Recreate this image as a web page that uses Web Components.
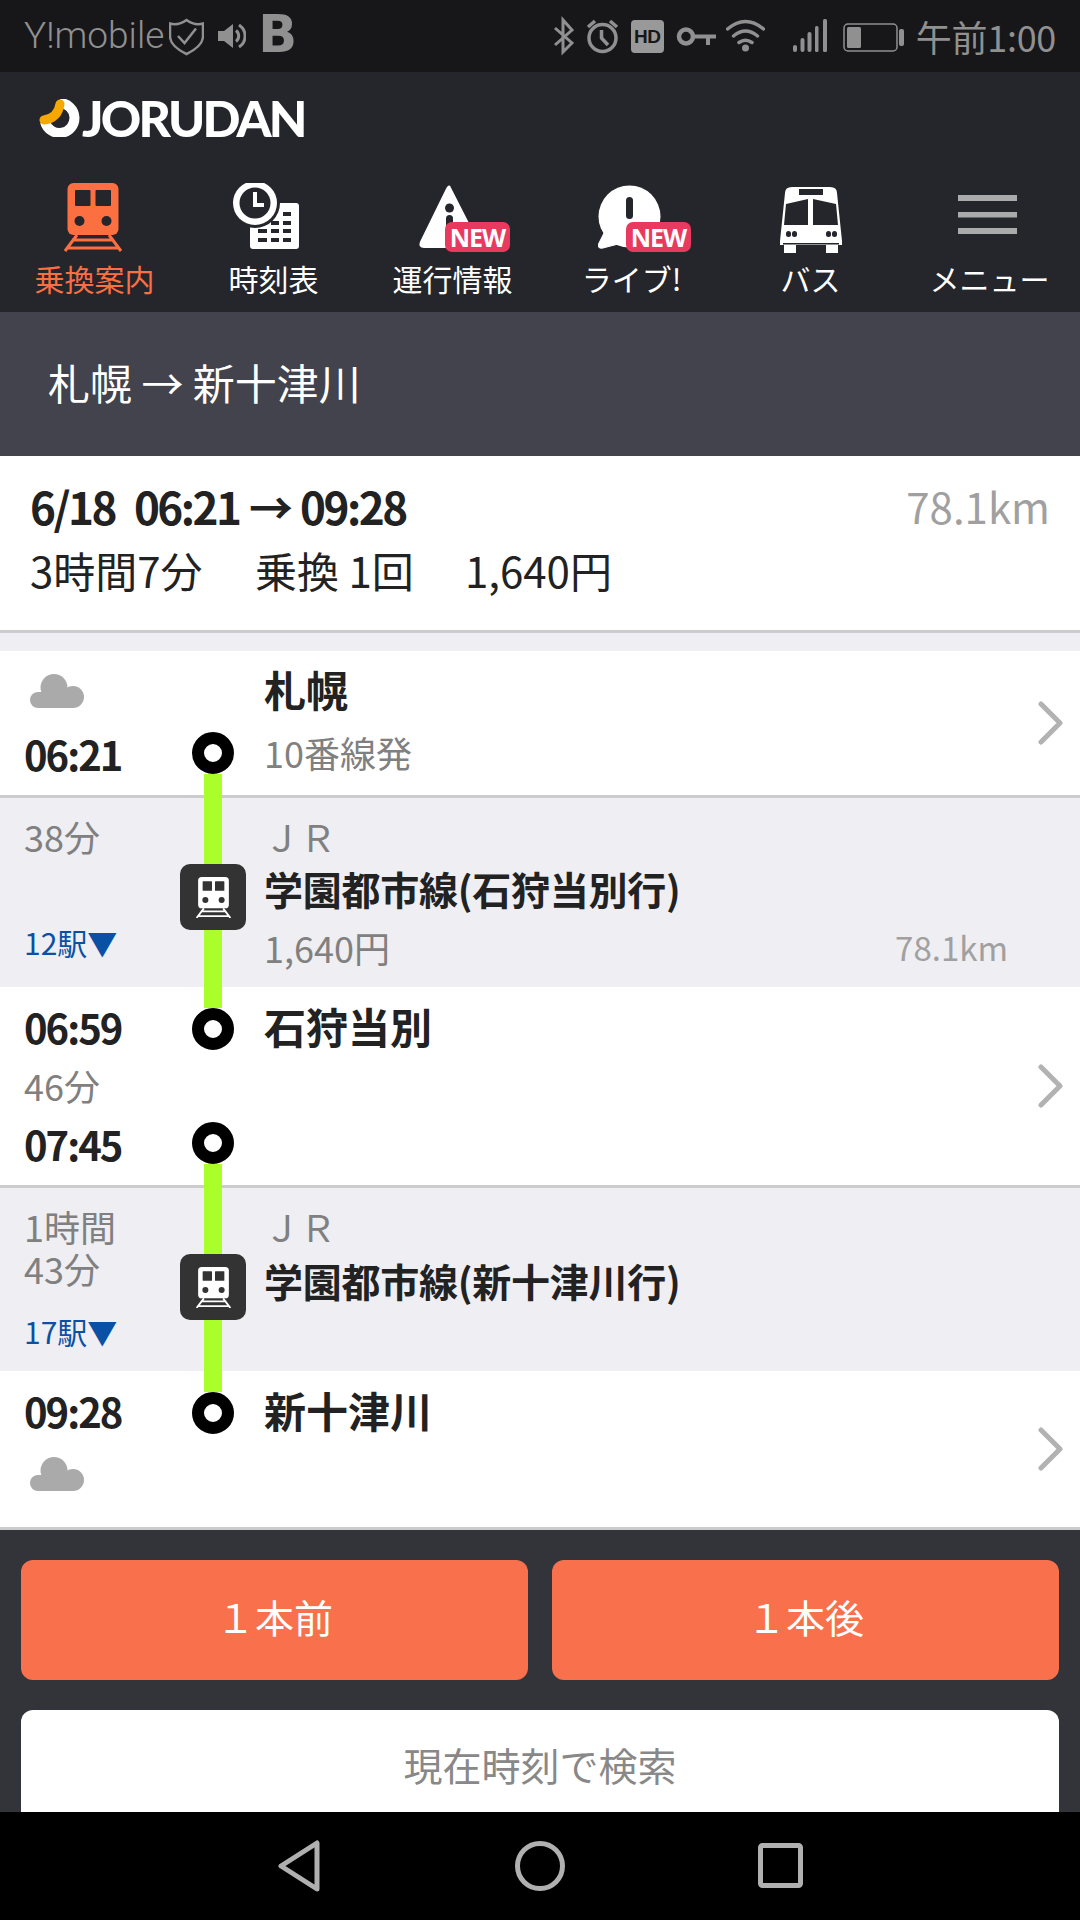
<!DOCTYPE html>
<html lang="ja"><head><meta charset="utf-8"><title>JORUDAN</title>
<style>
html,body{margin:0;padding:0;background:#eeeef3}
body{width:1080px;height:1920px;overflow:hidden;display:flex;flex-direction:column;font-family:"Noto Sans CJK JP","Noto Sans",sans-serif;color:#222}
</style></head><body>
<jr-status></jr-status>
<jr-header></jr-header>
<jr-title>札幌 → 新十津川</jr-title>
<jr-summary></jr-summary>
<jr-gap></jr-gap>

<jr-row h="147" border>
  <jr-icon slot="left" name="cloud" style="margin:23px 0 0 6px"></jr-icon>
  <jr-text slot="left" kind="time" style="margin-top:21px">06:21</jr-text>
  <jr-rail slot="track" space="81"></jr-rail><jr-dot slot="track"></jr-dot><jr-rail slot="track" h="24"></jr-rail>
  <jr-text slot="main" kind="name" style="margin-top:13px">札幌</jr-text>
  <jr-text slot="main" kind="sub" style="margin-top:16px">10番線発</jr-text>
  <jr-icon slot="aside" name="chevron"></jr-icon>
</jr-row>

<jr-row h="189" tone="seg">
  <jr-text slot="left" kind="sub" style="margin-top:16px">38分</jr-text>
  <jr-text slot="left" kind="stops" style="margin-top:64px">12駅▼</jr-text>
  <jr-rail slot="track" h="66"></jr-rail><jr-trainbox slot="track"></jr-trainbox><jr-rail slot="track" h="57"></jr-rail>
  <jr-text slot="main" kind="sub" style="margin-top:16px">ＪＲ</jr-text>
  <jr-text slot="main" kind="line" style="margin-top:5px">学園都市線(石狩当別行)</jr-text>
  <jr-split slot="main" style="margin-top:12px"><jr-text kind="sub">1,640円</jr-text><jr-text kind="dist">78.1km</jr-text></jr-split>
</jr-row>

<jr-row h="201" border>
  <jr-text slot="left" kind="time" style="margin-top:15px">06:59</jr-text>
  <jr-text slot="left" kind="sub" style="margin-top:11px">46分</jr-text>
  <jr-text slot="left" kind="time" style="margin-top:12px">07:45</jr-text>
  <jr-rail slot="track" h="21"></jr-rail><jr-dot slot="track"></jr-dot><jr-rail slot="track" space="72"></jr-rail><jr-dot slot="track"></jr-dot><jr-rail slot="track" h="24"></jr-rail>
  <jr-text slot="main" kind="name" style="margin-top:14px">石狩当別</jr-text>
  <jr-icon slot="aside" name="chevron"></jr-icon>
</jr-row>

<jr-row h="183" tone="seg">
  <jr-text slot="left" kind="sub" style="margin-top:17px;line-height:42px">1時間</jr-text>
  <jr-text slot="left" kind="sub" style="line-height:42px">43分</jr-text>
  <jr-text slot="left" kind="stops" style="margin-top:22px">17駅▼</jr-text>
  <jr-rail slot="track" h="66"></jr-rail><jr-trainbox slot="track"></jr-trainbox><jr-rail slot="track" h="51"></jr-rail>
  <jr-text slot="main" kind="sub" style="margin-top:16px">ＪＲ</jr-text>
  <jr-text slot="main" kind="line" style="margin-top:7px">学園都市線(新十津川行)</jr-text>
</jr-row>

<jr-row h="159" border>
  <jr-text slot="left" kind="time" style="margin-top:15px">09:28</jr-text>
  <jr-icon slot="left" name="cloud" style="margin:21px 0 0 6px"></jr-icon>
  <jr-rail slot="track" h="21"></jr-rail><jr-dot slot="track"></jr-dot>
  <jr-text slot="main" kind="name" style="margin-top:14px">新十津川</jr-text>
  <jr-icon slot="aside" name="chevron"></jr-icon>
</jr-row>

<jr-footer>
  <jr-button tone="orange">１本前</jr-button>
  <jr-button tone="orange">１本後</jr-button>
  <jr-button tone="white" wide>現在時刻で検索</jr-button>
</jr-footer>
<jr-nav></jr-nav>

<script>
const G='#909090', D='#25252c';
const ICONS={
 shield:[35,`<path d="M17.5 20C23 24 29 25 34 23.5V36C34 45 26 50 17.5 54C9 50 1 45 1 36V23.5C6 25 12 24 17.5 20Z" fill="none" stroke="${G}" stroke-width="2.5"/><path d="M9 36L15.5 43L27 28.5" fill="none" stroke="${G}" stroke-width="2.5"/>`,72],
 speaker:[28,`<path d="M0 31H6L15 24V48L6 41H0Z" fill="${G}"/><path d="M18 30.5a7 7 0 0 1 0 11M21 25a13 13 0 0 1 0 22" fill="none" stroke="${G}" stroke-width="3"/>`,72],
 bt:[21,`<path d="M2 28L19 43L10 52V20L19 30L2 45" fill="none" stroke="${G}" stroke-width="3"/>`,72],
 alarm:[33,`<circle cx="16.5" cy="38" r="13.5" fill="none" stroke="${G}" stroke-width="3.500"/><path d="M15.500 30V38L22 45M2 27L9 21M31 27L24 21" fill="none" stroke="${G}" stroke-width="3.500"/>`,72],
 key:[40,`<circle cx="10" cy="36.500" r="7" fill="none" stroke="${G}" stroke-width="4.500"/><path d="M17 36.500H40M32 36.500V45" fill="none" stroke="${G}" stroke-width="4"/>`,72],
 wifi:[39,`<path d="M1.500 29Q19.500 14 37.500 29M7.500 36Q19.500 26 31.500 36M13 42.500Q19.500 38 26 42.500" fill="none" stroke="${G}" stroke-width="3.500" stroke-linecap="round"/><circle cx="19.500" cy="48" r="3.500" fill="${G}"/>`,72],
 signal:[34,`<g fill="${G}"><rect x="0" y="45" width="4" height="7" rx="2"/><rect x="7.500" y="38" width="4" height="14" rx="2"/><rect x="14.500" y="32" width="4" height="20" rx="2"/><rect x="22" y="26" width="3.500" height="26" rx="1.500"/><rect x="30" y="19" width="4" height="33" rx="1.500"/></g>`,72],
 battery:[61,`<rect x="1" y="24" width="53" height="27" rx="4" fill="none" stroke="${G}" stroke-width="1.500"/><rect x="4" y="27" width="14" height="21" rx="1.500" fill="${G}"/><rect x="56" y="29" width="5" height="17" rx="2" fill="${G}"/>`,72],
 train:[58,`<rect x="3.500" y="0" width="51" height="52" rx="6" fill="currentColor"/><g fill="var(--hole,${D})"><rect x="11" y="7" width="15.500" height="16" rx="1"/><rect x="31.500" y="7" width="15.500" height="16" rx="1"/><circle cx="15.500" cy="38" r="5"/><circle cx="42.500" cy="38" r="5"/></g><path d="M13 52L1 68M45 52L57 68M8 57H50M3 65H55" stroke="currentColor" stroke-width="3" fill="none"/>`,68],
 tab_train:[58,`<rect x="3.500" y="0" width="51" height="52" rx="6" fill="currentColor"/><g fill="${D}"><rect x="11" y="7" width="15.500" height="16" rx="1"/><rect x="31.500" y="7" width="15.500" height="16" rx="1"/><circle cx="15.500" cy="38" r="5"/><circle cx="42.500" cy="38" r="5"/></g><path d="M13 52L1 68M45 52L57 68M8 57H50M3 65H55" stroke="currentColor" stroke-width="3" fill="none"/>`,70],
 timetable:[66,`<rect x="17" y="20" width="49" height="46" rx="3" fill="#fff"/><g fill="${D}"><rect x="50" y="29" width="8" height="4"/><rect x="25" y="38" width="9" height="4"/><rect x="38" y="38" width="8" height="4"/><rect x="50" y="38" width="8" height="4"/><rect x="25" y="46" width="9" height="4"/><rect x="38" y="46" width="8" height="4"/><rect x="50" y="46" width="8" height="4"/><rect x="25" y="55" width="9" height="4"/><rect x="38" y="55" width="8" height="4"/><rect x="50" y="55" width="8" height="4"/></g><circle cx="22" cy="20" r="25" fill="${D}"/><circle cx="22" cy="20" r="22" fill="#fff"/><circle cx="22" cy="20" r="15.500" fill="${D}"/><path d="M22 9V22H31" fill="none" stroke="#fff" stroke-width="4"/>`,70],
 warning:[66,`<path d="M30.500 4L58 58Q60 64 56 64H5Q0 64 2 59L27 8Q30 2 30.500 4Z" fill="#fff" stroke="#fff" stroke-width="2" stroke-linejoin="round"/><circle cx="30.500" cy="25" r="4.500" fill="${D}"/><rect x="27" y="32" width="7" height="30" rx="3.500" fill="${D}"/>`,70],
 bubble:[63,`<circle cx="31.500" cy="33.500" r="31" fill="#fff"/><path d="M6 50L0 62Q0 66 5 65L24 60Z" fill="#fff" stroke="#fff" stroke-linejoin="round"/><rect x="28" y="14" width="7" height="22" rx="3.500" fill="${D}"/>`,70],
 bus:[62,`<path d="M5 10Q5 4 12 4H50Q57 4 57 10L62 58V62H58V70H46V62H16V70H4V62H0V58Z" fill="#fff"/><g fill="${D}"><rect x="19" y="6" width="24" height="6"/><path d="M6 21L28 16V42H4Z"/><path d="M33 16L56 21L58 42H33Z"/><rect x="6" y="48" width="5" height="6" rx="2.500"/><rect x="12" y="48" width="5" height="6" rx="2.500"/><rect x="46" y="48" width="5" height="6" rx="2.500"/><rect x="52" y="48" width="5" height="6" rx="2.500"/><rect x="3" y="60" width="56" height="1.500"/></g>`,70],
 menu:[59,`<g fill="#aaa"><rect y="12" width="59" height="6"/><rect y="29" width="59" height="5.500"/><rect y="45" width="59" height="6"/></g>`,70],
 cloud:[54,`<g fill="#aaa"><circle cx="24" cy="13.500" r="13.500"/><circle cx="43" cy="23" r="11"/><circle cx="8" cy="26" r="8"/><rect x="8" y="18" width="35" height="16"/></g>`,34],
 chevron:[25,`<path d="M3 3L22 22L3 41" fill="none" stroke="#b2b2b2" stroke-width="5" stroke-linecap="round" stroke-linejoin="round"/>`,44],
 ring:[42,`<path d="M21 4A15 15 0 1 1 6 23" fill="none" stroke="#fff" stroke-width="10"/><path d="M5 21Q19 19 21 5" fill="none" stroke="#f7a800" stroke-width="9" stroke-linecap="round"/>`,38]
};
function svg(name){const [w,b,h]=ICONS[name];return `<svg xmlns="http://www.w3.org/2000/svg" width="${w}" height="${h}" viewBox="0 0 ${w} ${h}" style="display:block">${b}</svg>`;}
function def(tag,fn){customElements.define(tag,class extends HTMLElement{connectedCallback(){if(this.shadowRoot)return;const r=this.attachShadow({mode:'open'});r.innerHTML=fn(this);}});}

def('jr-icon',e=>`<style>:host{display:block;color:inherit}</style>${svg(e.getAttribute('name'))}`);

def('jr-status',()=>`<style>
:host{display:flex;align-items:center;height:72px;flex:none;background:#17171a;padding:0 24px 0 24px;box-sizing:border-box;color:${G};font-family:Roboto,"Noto Sans CJK JP",sans-serif;overflow:hidden}
.c{font-size:37px;font-weight:300;line-height:72px;white-space:nowrap}
.t{font-size:36px;font-family:"Noto Sans CJK JP",sans-serif;font-weight:400;margin-left:12px;line-height:68px;white-space:nowrap;letter-spacing:-.3px}
.b{font:bold 51px "DejaVu Sans",sans-serif;line-height:72px;margin-left:12px;position:relative;top:-1px}
.hd{width:33px;height:33px;border-radius:4px;background:#999;color:#17171a;font:bold 19px "Liberation Sans",sans-serif;display:flex;align-items:center;justify-content:center;margin:1px 0 0 12px;letter-spacing:-.5px}
.s{display:flex;align-items:center}.r{margin-left:auto}
svg{flex:none}
.g12{margin-left:12px}.g14{margin-left:14px}.g5{margin-left:5px}.g10{margin-left:10px}.g28{margin-left:28px}.g16{margin-left:16px}
</style><div class="s"><span class="c">Y!mobile</span><span class="g5" style="display:flex">${svg('shield')}</span><span class="g14" style="display:flex">${svg('speaker')}</span><span class="b">B</span></div>
<div class="s r">${svg('bt')}<span class="g12" style="display:flex">${svg('alarm')}</span><span class="hd">HD</span><span class="g12" style="display:flex">${svg('key')}</span><span class="g10" style="display:flex">${svg('wifi')}</span><span class="g28" style="display:flex">${svg('signal')}</span><span class="g16" style="display:flex">${svg('battery')}</span><span class="t">午前1:00</span></div>`);

def('jr-tab',e=>`<style>
:host{display:flex;flex-direction:column;align-items:center;color:#fff}
:host([active]){color:#fb6f41}
.i{height:70px;position:relative;display:block}
.n{position:absolute;top:39px;height:30px;width:65px;border-radius:7px;background:#e8395f;color:#fff;font:bold 25px/30px "Noto Sans",sans-serif;text-align:center;letter-spacing:-1px}
.l{margin-top:5px;font-size:30px;line-height:40px;white-space:nowrap}
</style><div class="i" style="margin-right:${e.getAttribute('shift')||0}px">${svg(e.getAttribute('icon'))}${e.hasAttribute('badge')?`<span class="n" style="left:${e.getAttribute('badge')}px">NEW</span>`:''}</div><div class="l"><slot></slot></div>`);

def('jr-header',()=>`<style>
:host{display:block;height:240px;flex:none;background:${D};box-sizing:border-box;overflow:hidden}
.logo{height:92px;display:flex;align-items:center;padding-left:39px;box-sizing:border-box}
.w{font:900 50px/1 Lato,"Noto Sans",sans-serif;color:#fff;letter-spacing:-2.8px;margin-left:1px;white-space:nowrap}
.tabs{margin-top:19px;padding:0 1px 0 5px;display:grid;grid-template-columns:repeat(6,179px)}
</style><div class="logo">${svg('ring')}<span class="w">JORUDAN</span></div>
<div class="tabs"><jr-tab icon="tab_train" shift="3" active>乗換案内</jr-tab><jr-tab icon="timetable" shift="15">時刻表</jr-tab><jr-tab icon="warning" shift="1" badge="26">運行情報</jr-tab><jr-tab icon="bubble" shift="4" badge="28">ライブ!</jr-tab><jr-tab icon="bus">バス</jr-tab><jr-tab icon="menu" shift="5">メニュー</jr-tab></div>`);

def('jr-title',()=>`<style>:host{display:flex;align-items:center;height:144px;flex:none;padding:0 0 6px 48px;box-sizing:border-box;background:#42434c;color:#fff;font-size:42px}</style><slot></slot>`);

def('jr-summary',()=>`<style>
:host{display:block;height:177px;flex:none;box-sizing:border-box;background:#fff;border-bottom:3px solid #ccc;padding:25px 30px 0 30px;color:#222}
.a{display:flex;justify-content:space-between;line-height:50px;height:50px}
.h{font-size:44px;font-weight:700;letter-spacing:-2.5px;word-spacing:2px;white-space:pre}
.d{font-size:42px;color:#a0a0a0}
.b{margin-top:14px;font-size:42px;line-height:50px;display:flex;white-space:nowrap}
.b span:nth-child(1){width:225px}.b span:nth-child(2){width:210px}
</style><div class="a"><span class="h">6/18  06:21 → 09:28</span><span class="d">78.1km</span></div>
<div class="b"><span>3時間7分</span><span>乗換 1回</span><span>1,640円</span></div>`);

def('jr-gap',()=>`<style>:host{display:block;height:18px;flex:none;background:#eeeef3}</style>`);

def('jr-row',e=>`<style>
:host{display:grid;grid-template-columns:156px 66px 1fr auto;position:relative;flex:none;box-sizing:border-box;background:#fff;padding-left:24px}
:host([border]){border-bottom:3px solid #ccc}
:host([tone=seg]){background:#eeeef3}
.c{display:flex;flex-direction:column;min-width:0}
.track{align-items:center;z-index:1}
:host([border]) .track{margin-bottom:-3px}
.main{padding-left:18px}
.aside{align-self:center;padding-right:17px}
</style><style>:host{height:${e.getAttribute('h')}px}</style>
<div class="c"><slot name="left"></slot></div><div class="c track"><slot name="track"></slot></div><div class="c main"><slot name="main"></slot></div><div class="aside"><slot name="aside"></slot></div>`);

def('jr-rail',e=>`<style>:host{display:block;flex:none;width:18px}</style><style>:host{height:${e.getAttribute('h')||e.getAttribute('space')}px;background:${e.hasAttribute('h')?'#aaff2a':'transparent'}}</style>`);
def('jr-dot',()=>`<style>:host{display:block;flex:none;width:42px;height:42px;box-sizing:border-box;border-radius:50%;background:#fff;border:12px solid #000}</style>`);
def('jr-trainbox',()=>`<style>:host{display:flex;flex:none;width:66px;height:66px;border-radius:10px;background:#333;align-items:center;justify-content:center;color:#fff;--hole:#333}svg{width:35px;height:41px}</style>${svg('train')}`);

const KINDS={
 time:'font-size:40px;font-weight:700;line-height:50px;letter-spacing:-2px;color:#222',
 sub:'font-size:36px;line-height:44px;color:#808080',
 name:'font-size:42px;font-weight:700;line-height:50px;color:#222',
 line:'font-size:39px;font-weight:700;line-height:50px;color:#222;letter-spacing:-.25px',
 stops:'font-size:30px;line-height:40px;color:#0a50a5',
 dist:'font-size:33px;line-height:44px;color:#a0a0a0;padding-right:55px'
};
def('jr-text',e=>`<style>:host{display:block;white-space:nowrap;${KINDS[e.getAttribute('kind')]}}</style><slot></slot>`);
def('jr-split',()=>`<style>:host{display:flex;justify-content:space-between}</style><slot></slot>`);

def('jr-footer',()=>`<style>:host{display:grid;grid-template-columns:507px 507px;gap:30px 24px;align-content:start;height:282px;flex:none;box-sizing:border-box;padding:30px 21px 0;background:#33343a;overflow:hidden}</style><slot></slot>`);
def('jr-button',e=>`<style>
:host{display:flex;align-items:center;justify-content:center;height:120px;box-sizing:border-box;border-radius:12px;font-size:39px;flex:none}
:host([tone=orange]){background:#f8704c;color:#fff;padding-bottom:8px}
:host([tone=white]){background:#fff;color:#888;grid-column:1 / span 2;height:116px;padding-bottom:8px}
</style><slot></slot>`);

def('jr-nav',()=>`<style>:host{display:flex;height:108px;flex:none;background:#000;padding-left:278px;box-sizing:border-box}
svg{display:block;flex:none}</style>
<svg width="42" height="108" viewBox="0 0 42 108" style="margin-right:195px"><path d="M3 54L39 31V77Z" fill="none" stroke="#b0b0b0" stroke-width="5" stroke-linejoin="round"/></svg>
<svg width="50" height="108" viewBox="0 0 50 108" style="margin-right:193px"><circle cx="25" cy="54" r="22.500" fill="none" stroke="#b0b0b0" stroke-width="5"/></svg>
<svg width="45" height="108" viewBox="0 0 45 108"><rect x="2.500" y="33.500" width="40" height="40" rx="2" fill="none" stroke="#b0b0b0" stroke-width="5"/></svg>`);
</script>
</body></html>
